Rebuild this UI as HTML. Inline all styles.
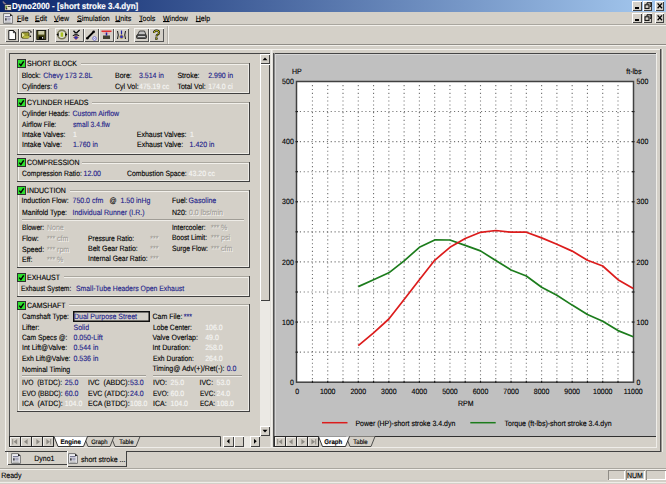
<!DOCTYPE html>
<html><head><meta charset="utf-8"><title>Dyno2000</title>
<style>
html,body{margin:0;padding:0;}
body{width:666px;height:484px;overflow:hidden;position:relative;background:#d4d0c8;font-family:"Liberation Sans",sans-serif;font-size:7px;}
div,span,svg{position:absolute;}
span{white-space:pre;line-height:8px;text-rendering:geometricPrecision;transform-origin:0 5px;transform:scaleY(1.1);-webkit-text-stroke:0.12px currentColor;}
u{text-decoration:underline;text-underline-offset:0px;text-decoration-thickness:0.8px;}
.k{color:#000;}
.b{color:#1e1e8a;}
.d{color:#f6f6f4;}
.e{color:#a3a09a;text-shadow:0.7px 0.7px 0 #fbfaf7;}
.tt{color:#fff;font-weight:bold;}
</style></head><body>
<div style="left:0px;top:0px;width:666px;height:12px;background:linear-gradient(90deg,#0a246a,#a6caf0)"></div>
<svg style="left:1px;top:0px" width="11" height="12" viewBox="0 0 11 12">
<path d="M2 1.5 Q3 3.5 5 4.5" stroke="#8a7a8a" stroke-width="1.6" fill="none"/>
<rect x="3.8" y="4.5" width="6.8" height="5.8" fill="#e6e0cc" stroke="#1a1a40" stroke-width="0.7"/>
<rect x="4.4" y="5.8" width="1.6" height="2.6" fill="#6a9a3a"/>
<rect x="6.6" y="6" width="3" height="1" fill="#504848"/>
<circle cx="5.6" cy="8.8" r="0.8" fill="#302010"/>
</svg>
<span class="tt" style="left:12.00px;top:2.59px;font-size:8px;">Dyno2000 - [short stroke 3.4.dyn]</span>
<div style="left:632px;top:1px;width:9.5px;height:9.5px;background:#d4d0c8;box-shadow:inset 1px 1px 0 #fff, inset -1px -1px 0 #404040"></div>
<div style="left:634.5px;top:7px;width:4px;height:1.5px;background:#000"></div>
<div style="left:642.5px;top:1px;width:9.5px;height:9.5px;background:#d4d0c8;box-shadow:inset 1px 1px 0 #fff, inset -1px -1px 0 #404040"></div>
<svg style="left:642.5px;top:1px" width="10" height="10"><path d="M4 1.8h4v3.5h-1.2M4 1.8v1.3" stroke="#000" stroke-width="1" fill="none"/><rect x="2" y="3.8" width="4" height="3.6" stroke="#000" stroke-width="1" fill="none"/></svg>
<div style="left:654.5px;top:1px;width:9.5px;height:9.5px;background:#d4d0c8;box-shadow:inset 1px 1px 0 #fff, inset -1px -1px 0 #404040"></div>
<svg style="left:654.5px;top:1px" width="10" height="10"><path d="M2.6 2.4L7 7.2M7 2.4L2.6 7.2" stroke="#000" stroke-width="1.3"/></svg>
<div style="left:632px;top:13px;width:9.5px;height:9.5px;background:#d4d0c8;box-shadow:inset 1px 1px 0 #fff, inset -1px -1px 0 #404040"></div>
<div style="left:634.5px;top:19px;width:4px;height:1.5px;background:#000"></div>
<div style="left:642.5px;top:13px;width:9.5px;height:9.5px;background:#d4d0c8;box-shadow:inset 1px 1px 0 #fff, inset -1px -1px 0 #404040"></div>
<svg style="left:642.5px;top:13px" width="10" height="10"><path d="M4 1.8h4v3.5h-1.2M4 1.8v1.3" stroke="#000" stroke-width="1" fill="none"/><rect x="2" y="3.8" width="4" height="3.6" stroke="#000" stroke-width="1" fill="none"/></svg>
<div style="left:654.5px;top:13px;width:9.5px;height:9.5px;background:#d4d0c8;box-shadow:inset 1px 1px 0 #fff, inset -1px -1px 0 #404040"></div>
<svg style="left:654.5px;top:13px" width="10" height="10"><path d="M2.6 2.4L7 7.2M7 2.4L2.6 7.2" stroke="#000" stroke-width="1.3"/></svg>
<svg style="left:3px;top:13px" width="10" height="11" viewBox="0 0 10 11">
<path d="M0.6 0.6H7.2L9.4 2.8V10.4H0.6Z" fill="#eeeef2" stroke="#6a6a6a" stroke-width="0.9"/>
<path d="M7 0.4V3H9.6Z" fill="#202020"/>
<rect x="2" y="3" width="5.6" height="1.3" fill="#7a7a96"/>
<rect x="2.2" y="5.2" width="1.4" height="2.4" fill="#202028"/>
<rect x="4.2" y="5" width="3.4" height="2.6" fill="#a8a8bc"/>
<rect x="1.8" y="8.6" width="6" height="1" fill="#9a9a9a"/>
</svg>
<span class="k" style="left:17.00px;top:15.60px;font-size:7px;"><u>F</u>ile</span>
<span class="k" style="left:35.00px;top:15.60px;font-size:7px;"><u>E</u>dit</span>
<span class="k" style="left:54.00px;top:15.60px;font-size:7px;"><u>V</u>iew</span>
<span class="k" style="left:77.00px;top:15.60px;font-size:7px;"><u>S</u>imulation</span>
<span class="k" style="left:115.30px;top:15.60px;font-size:7px;"><u>U</u>nits</span>
<span class="k" style="left:139.00px;top:15.60px;font-size:7px;"><u>T</u>ools</span>
<span class="k" style="left:163.00px;top:15.60px;font-size:7px;"><u>W</u>indow</span>
<span class="k" style="left:195.80px;top:15.60px;font-size:7px;"><u>H</u>elp</span>
<div style="left:0px;top:24px;width:666px;height:1px;background:#a9a69f"></div>
<div style="left:0px;top:25px;width:666px;height:1px;background:#f2f0eb"></div>
<div style="left:0px;top:44px;width:666px;height:1px;background:#8f8c86"></div>
<div style="left:0px;top:45px;width:666px;height:1px;background:#f2f0eb"></div>
<div style="left:167px;top:26px;width:1px;height:18px;background:#b5b2ab"></div>
<div style="left:168px;top:26px;width:1px;height:18px;background:#f2f0eb"></div>
<div style="left:4.5px;top:28px;width:14.5px;height:14px;box-shadow:inset 1px 1px 0 #f6f5f1, inset -1px -1px 0 #555"></div>
<div style="left:19px;top:28px;width:14.5px;height:14px;box-shadow:inset 1px 1px 0 #f6f5f1, inset -1px -1px 0 #555"></div>
<div style="left:34px;top:28px;width:14.5px;height:14px;box-shadow:inset 1px 1px 0 #f6f5f1, inset -1px -1px 0 #555"></div>
<div style="left:54.5px;top:28px;width:14.5px;height:14px;box-shadow:inset 1px 1px 0 #f6f5f1, inset -1px -1px 0 #555"></div>
<div style="left:69px;top:28px;width:14.5px;height:14px;box-shadow:inset 1px 1px 0 #f6f5f1, inset -1px -1px 0 #555"></div>
<div style="left:84px;top:28px;width:14.5px;height:14px;box-shadow:inset 1px 1px 0 #f6f5f1, inset -1px -1px 0 #555"></div>
<div style="left:99px;top:28px;width:14.5px;height:14px;box-shadow:inset 1px 1px 0 #f6f5f1, inset -1px -1px 0 #555"></div>
<div style="left:114px;top:28px;width:14.5px;height:14px;box-shadow:inset 1px 1px 0 #f6f5f1, inset -1px -1px 0 #555"></div>
<div style="left:134px;top:28px;width:14.5px;height:14px;box-shadow:inset 1px 1px 0 #f6f5f1, inset -1px -1px 0 #555"></div>
<div style="left:149px;top:28px;width:14.5px;height:14px;box-shadow:inset 1px 1px 0 #f6f5f1, inset -1px -1px 0 #555"></div>
<svg style="left:4.5px;top:28px" width="15" height="14" viewBox="0 0 15 14"><path d="M3.8 2.5h4.6l2.2 2.2v6.9h-6.8z" fill="#fff" stroke="#000" stroke-width="0.9"/><path d="M8.4 2.5v2.2h2.2" fill="none" stroke="#000" stroke-width="0.8"/></svg>
<svg style="left:19px;top:28px" width="15" height="14" viewBox="0 0 15 14"><path d="M2.5 5.5Q2.5 4.2 4 4.2H8.5Q10 4.2 10 5.5V9Q10 10.2 8.5 10.2H4Q2.5 10.2 2.5 9Z" fill="#9a9a30" stroke="#303010" stroke-width="0.8"/><path d="M3 4.8L5.8 7L3 9.2Z" fill="#e4e4a0"/><path d="M5 8H10.8L9.6 10.2H4Z" fill="#b8b840"/><path d="M8.8 3Q10.4 1.8 11.8 3.2" stroke="#000" stroke-width="0.9" fill="none"/><circle cx="12" cy="4" r="0.8" fill="#000"/><circle cx="11.4" cy="8.2" r="0.7" fill="#000"/></svg>
<svg style="left:34px;top:28px" width="15" height="14" viewBox="0 0 15 14"><rect x="2.8" y="2.5" width="9" height="9" fill="#4a4a18" stroke="#000" stroke-width="0.8"/><rect x="4.3" y="3" width="6" height="3.6" fill="#c8c8a8"/><rect x="4.8" y="8.5" width="5" height="3" fill="#000"/><rect x="8" y="9" width="1.2" height="1.6" fill="#ddd"/></svg>
<svg style="left:54.5px;top:28px" width="15" height="14" viewBox="0 0 15 14"><circle cx="6.9" cy="6.6" r="4.2" fill="#e4e4d8" stroke="#7a7a58" stroke-width="1.6"/><rect x="5.6" y="4.4" width="2.6" height="4.4" fill="#a8c020"/><path d="M1.4 6.6L3.6 4.9V8.3Z M12.4 6.6L10.2 4.9V8.3Z" fill="#000"/></svg>
<svg style="left:69px;top:28px" width="15" height="14" viewBox="0 0 15 14"><path d="M4.5 2.8L7 5.4L10.6 2" stroke="#000" stroke-width="1.3" fill="none"/><circle cx="7" cy="6.2" r="1.2" fill="#fff" stroke="#000" stroke-width="0.6"/><path d="M3.8 7.6Q7 5.6 10.2 7.6" stroke="#000" stroke-width="1" fill="none"/><path d="M7 7.6L9.6 9.5L7 11.8L4.4 9.5Z" fill="#3030b0" stroke="#d07040" stroke-width="0.6"/></svg>
<svg style="left:84px;top:28px" width="15" height="14" viewBox="0 0 15 14"><path d="M3.5 10l6-6" stroke="#000" stroke-width="1.8"/><circle cx="3.3" cy="10.2" r="1.3" fill="#000"/><circle cx="9.7" cy="3.8" r="1.3" fill="#000"/><circle cx="10.5" cy="10.5" r="1.8" fill="#fff" stroke="#5050c0" stroke-width="0.8"/><path d="M9.6 10.5h1.8" stroke="#5050c0" stroke-width="0.6"/></svg>
<svg style="left:99px;top:28px" width="15" height="14" viewBox="0 0 15 14"><rect x="2.5" y="2.5" width="10" height="1.5" fill="#e03030"/><path d="M3 4.5q4.5 3 9 0" fill="#f0a0a0"/><rect x="4" y="7.5" width="7" height="3.5" fill="#404030"/><path d="M7.5 4.5v3" stroke="#2020a0" stroke-width="1.5"/></svg>
<svg style="left:114px;top:28px" width="15" height="14" viewBox="0 0 15 14"><path d="M3.5 3q1.5 4 0 8M11.5 3q-1.5 4 0 8" stroke="#000" stroke-width="0.9" fill="none"/><path d="M7.5 2.5v4" stroke="#2020a0" stroke-width="1.2"/><circle cx="7.5" cy="8.8" r="1.8" fill="#3030c0" stroke="#c0a020" stroke-width="0.6"/></svg>
<svg style="left:134px;top:28px" width="15" height="14" viewBox="0 0 15 14"><path d="M3.5 7l2-4h5l1.5 4z" fill="#c0c0c0" stroke="#202020" stroke-width="0.8"/><rect x="2.5" y="7" width="10" height="3.5" rx="1" fill="#606060" stroke="#202020" stroke-width="0.8"/><rect x="4" y="8" width="7" height="1" fill="#d0d0d0"/></svg>
<svg style="left:149px;top:28px" width="15" height="14" viewBox="0 0 15 14"><path d="M5 5q0-2.5 2.5-2.5t2.5 2.2q0 1.3-1.6 2.2-0.9 0.6-0.9 1.6" stroke="#000" stroke-width="2" fill="none"/><path d="M5 5q0-2.5 2.5-2.5t2.5 2.2q0 1.3-1.6 2.2-0.9 0.6-0.9 1.6" stroke="#d0d020" stroke-width="1" fill="none"/><rect x="6.6" y="9.8" width="1.8" height="1.8" fill="#a0a010" stroke="#000" stroke-width="0.5"/></svg>
<div style="left:5px;top:49px;width:655px;height:1px;background:#f4f2ee"></div>
<div style="left:5px;top:49px;width:1px;height:402px;background:#f4f2ee"></div>
<div style="left:5px;top:451px;width:657px;height:1px;background:#404040"></div>
<div style="left:660px;top:49px;width:1px;height:403px;background:#4a4a4a"></div>
<div style="left:661px;top:49px;width:1px;height:403px;background:#9a9892"></div>
<div style="left:662px;top:49px;width:1px;height:403px;background:#eceae4"></div>
<div style="left:9px;top:53px;width:647px;height:1px;background:#454545"></div>
<div style="left:9px;top:53px;width:1px;height:394px;background:#505050"></div>
<div style="left:9px;top:447px;width:648px;height:1px;background:#efede9"></div>
<div style="left:656px;top:53px;width:1px;height:395px;background:#efede9"></div>
<div style="left:17px;top:63px;width:233px;height:31px;box-shadow:inset -1px -1px 0 #404040, inset 1px 1px 0 #aaa79f, inset -2px -2px 0 #eeece7, inset 2px 2px 0 #f2f0eb"></div>
<div style="left:26px;top:61.5px;width:55px;height:3.5px;background:#d4d0c8"></div>
<svg style="left:17px;top:59.4px" width="9" height="9" viewBox="0 0 9 9"><rect x="0.5" y="0.5" width="8" height="8" fill="#2ee02e" stroke="#303030" stroke-width="1"/><path d="M2.3 4.6l1.6 2 2.8-4.2" stroke="#000" stroke-width="1.5" fill="none"/></svg>
<span class="k" style="left:27.00px;top:61.20px;font-size:7px;">SHORT BLOCK</span>
<span class="k" style="left:21.70px;top:73.40px;font-size:7px;">Block:</span>
<span class="b" style="left:43.30px;top:73.40px;font-size:7px;">Chevy 173 2.8L</span>
<span class="k" style="left:22.00px;top:83.90px;font-size:7px;transform:scaleX(0.966) scaleY(1.1);">Cylinders:</span>
<span class="b" style="left:53.50px;top:83.90px;font-size:7px;">6</span>
<span class="k" style="left:115.00px;top:73.40px;font-size:7px;">Bore:</span>
<span class="b" style="left:139.00px;top:73.40px;font-size:7px;">3.514 in</span>
<span class="k" style="left:177.40px;top:73.40px;font-size:7px;">Stroke:</span>
<span class="b" style="left:208.20px;top:73.40px;font-size:7px;">2.990 in</span>
<span class="k" style="left:115.00px;top:83.90px;font-size:7px;">Cyl Vol:</span>
<span class="d" style="left:139.00px;top:83.90px;font-size:7px;">475.19 cc</span>
<span class="k" style="left:177.40px;top:83.90px;font-size:7px;">Total Vol:</span>
<span class="d" style="left:208.20px;top:83.90px;font-size:7px;">174.0 ci</span>
<div style="left:17px;top:101.5px;width:233px;height:53.5px;box-shadow:inset -1px -1px 0 #404040, inset 1px 1px 0 #aaa79f, inset -2px -2px 0 #eeece7, inset 2px 2px 0 #f2f0eb"></div>
<div style="left:26px;top:100.0px;width:66px;height:3.5px;background:#d4d0c8"></div>
<svg style="left:17px;top:97.9px" width="9" height="9" viewBox="0 0 9 9"><rect x="0.5" y="0.5" width="8" height="8" fill="#2ee02e" stroke="#303030" stroke-width="1"/><path d="M2.3 4.6l1.6 2 2.8-4.2" stroke="#000" stroke-width="1.5" fill="none"/></svg>
<span class="k" style="left:27.00px;top:99.70px;font-size:7px;">CYLINDER HEADS</span>
<span class="k" style="left:21.60px;top:111.40px;font-size:7px;transform:scaleX(0.959) scaleY(1.1);">Cylinder Heads:</span>
<span class="b" style="left:72.50px;top:111.40px;font-size:7px;">Custom Airflow</span>
<span class="k" style="left:22.00px;top:121.70px;font-size:7px;transform:scaleX(0.944) scaleY(1.1);">Airflow File:</span>
<span class="b" style="left:73.00px;top:121.70px;font-size:7px;transform:scaleX(0.96) scaleY(1.1);">small 3.4.flw</span>
<span class="k" style="left:22.00px;top:132.00px;font-size:7px;">Intake Valves:</span>
<span class="d" style="left:73.00px;top:132.00px;font-size:7px;">1</span>
<span class="k" style="left:22.00px;top:142.30px;font-size:7px;">Intake Valve:</span>
<span class="b" style="left:73.00px;top:142.30px;font-size:7px;">1.760 in</span>
<span class="k" style="left:136.80px;top:132.00px;font-size:7px;">Exhaust Valves:</span>
<span class="d" style="left:190.00px;top:132.00px;font-size:7px;">1</span>
<span class="k" style="left:137.00px;top:142.30px;font-size:7px;">Exhaust Valve:</span>
<span class="b" style="left:189.60px;top:142.30px;font-size:7px;">1.420 in</span>
<div style="left:17px;top:161.6px;width:233px;height:20.900000000000006px;box-shadow:inset -1px -1px 0 #404040, inset 1px 1px 0 #aaa79f, inset -2px -2px 0 #eeece7, inset 2px 2px 0 #f2f0eb"></div>
<div style="left:26px;top:160.1px;width:56px;height:3.5px;background:#d4d0c8"></div>
<svg style="left:17px;top:158.0px" width="9" height="9" viewBox="0 0 9 9"><rect x="0.5" y="0.5" width="8" height="8" fill="#2ee02e" stroke="#303030" stroke-width="1"/><path d="M2.3 4.6l1.6 2 2.8-4.2" stroke="#000" stroke-width="1.5" fill="none"/></svg>
<span class="k" style="left:27.00px;top:159.80px;font-size:7px;">COMPRESSION</span>
<span class="k" style="left:21.50px;top:170.90px;font-size:7px;transform:scaleX(0.973) scaleY(1.1);">Compression Ratio:</span>
<span class="b" style="left:83.50px;top:170.90px;font-size:7px;">12.00</span>
<span class="k" style="left:126.50px;top:170.90px;font-size:7px;transform:scaleX(0.978) scaleY(1.1);">Combustion Space:</span>
<span class="d" style="left:188.60px;top:170.90px;font-size:7px;">43.20 cc</span>
<div style="left:17px;top:189.8px;width:233px;height:78.69999999999999px;box-shadow:inset -1px -1px 0 #404040, inset 1px 1px 0 #aaa79f, inset -2px -2px 0 #eeece7, inset 2px 2px 0 #f2f0eb"></div>
<div style="left:26px;top:188.3px;width:44px;height:3.5px;background:#d4d0c8"></div>
<svg style="left:17px;top:186.2px" width="9" height="9" viewBox="0 0 9 9"><rect x="0.5" y="0.5" width="8" height="8" fill="#2ee02e" stroke="#303030" stroke-width="1"/><path d="M2.3 4.6l1.6 2 2.8-4.2" stroke="#000" stroke-width="1.5" fill="none"/></svg>
<span class="k" style="left:27.00px;top:188.00px;font-size:7px;">INDUCTION</span>
<span class="k" style="left:21.50px;top:198.30px;font-size:7px;">Induction Flow:</span>
<span class="b" style="left:72.50px;top:198.30px;font-size:7px;">750.0 cfm</span>
<span class="k" style="left:109.50px;top:198.30px;font-size:7px;">@</span>
<span class="b" style="left:120.50px;top:198.30px;font-size:7px;">1.50 inHg</span>
<span class="k" style="left:172.00px;top:198.30px;font-size:7px;">Fuel:</span>
<span class="b" style="left:188.60px;top:198.30px;font-size:7px;">Gasoline</span>
<span class="k" style="left:21.50px;top:209.60px;font-size:7px;transform:scaleX(0.99) scaleY(1.1);">Manifold Type:</span>
<span class="b" style="left:72.50px;top:209.60px;font-size:7px;">Individual Runner (I.R.)</span>
<span class="k" style="left:172.00px;top:209.60px;font-size:7px;">N20:</span>
<span class="e" style="left:189.00px;top:209.60px;font-size:7px;">0.0 lbs/min</span>
<div style="left:22px;top:219px;width:221.5px;height:1px;background:#a09d96"></div>
<div style="left:22px;top:220px;width:221.5px;height:1px;background:#eeece7"></div>
<span class="k" style="left:22.00px;top:225.20px;font-size:7px;transform:scaleX(0.948) scaleY(1.1);">Blower:</span>
<span class="e" style="left:47.00px;top:225.20px;font-size:7px;">None</span>
<span class="k" style="left:172.00px;top:224.90px;font-size:7px;transform:scaleX(0.963) scaleY(1.1);">Intercooler:</span>
<span class="e" style="left:211.00px;top:224.90px;font-size:7px;">*** %</span>
<span class="k" style="left:22.00px;top:235.90px;font-size:7px;">Flow:</span>
<span class="e" style="left:47.00px;top:235.90px;font-size:7px;">*** cfm</span>
<span class="k" style="left:88.00px;top:235.50px;font-size:7px;transform:scaleX(0.958) scaleY(1.1);">Pressure Ratio:</span>
<span class="e" style="left:150.30px;top:235.50px;font-size:7px;">***</span>
<span class="k" style="left:172.00px;top:235.20px;font-size:7px;transform:scaleX(0.958) scaleY(1.1);">Boost Limit:</span>
<span class="e" style="left:211.00px;top:235.20px;font-size:7px;">*** psi</span>
<span class="k" style="left:22.00px;top:246.50px;font-size:7px;">Speed:</span>
<span class="e" style="left:47.00px;top:246.50px;font-size:7px;">*** rpm</span>
<span class="k" style="left:88.00px;top:246.00px;font-size:7px;">Belt Gear Ratio:</span>
<span class="e" style="left:150.30px;top:246.00px;font-size:7px;">***</span>
<span class="k" style="left:172.00px;top:246.00px;font-size:7px;transform:scaleX(0.962) scaleY(1.1);">Surge Flow:</span>
<span class="e" style="left:211.00px;top:246.00px;font-size:7px;">*** cfm</span>
<span class="k" style="left:22.00px;top:256.50px;font-size:7px;">Eff:</span>
<span class="e" style="left:47.00px;top:256.50px;font-size:7px;">*** %</span>
<span class="k" style="left:88.00px;top:256.00px;font-size:7px;transform:scaleX(0.977) scaleY(1.1);">Internal Gear Ratio:</span>
<span class="e" style="left:150.30px;top:256.00px;font-size:7px;">***</span>
<div style="left:17px;top:276.3px;width:233px;height:20.5px;box-shadow:inset -1px -1px 0 #404040, inset 1px 1px 0 #aaa79f, inset -2px -2px 0 #eeece7, inset 2px 2px 0 #f2f0eb"></div>
<div style="left:26px;top:274.8px;width:38px;height:3.5px;background:#d4d0c8"></div>
<svg style="left:17px;top:272.7px" width="9" height="9" viewBox="0 0 9 9"><rect x="0.5" y="0.5" width="8" height="8" fill="#2ee02e" stroke="#303030" stroke-width="1"/><path d="M2.3 4.6l1.6 2 2.8-4.2" stroke="#000" stroke-width="1.5" fill="none"/></svg>
<span class="k" style="left:27.00px;top:274.50px;font-size:7px;">EXHAUST</span>
<span class="k" style="left:21.00px;top:286.30px;font-size:7px;transform:scaleX(0.958) scaleY(1.1);">Exhaust System:</span>
<span class="b" style="left:76.00px;top:286.30px;font-size:7px;transform:scaleX(0.98) scaleY(1.1);">Small-Tube Headers Open Exhaust</span>
<div style="left:17px;top:304.4px;width:233px;height:107.60000000000002px;box-shadow:inset -1px -1px 0 #404040, inset 1px 1px 0 #aaa79f, inset -2px -2px 0 #eeece7, inset 2px 2px 0 #f2f0eb"></div>
<div style="left:26px;top:302.9px;width:43px;height:3.5px;background:#d4d0c8"></div>
<svg style="left:17px;top:300.8px" width="9" height="9" viewBox="0 0 9 9"><rect x="0.5" y="0.5" width="8" height="8" fill="#2ee02e" stroke="#303030" stroke-width="1"/><path d="M2.3 4.6l1.6 2 2.8-4.2" stroke="#000" stroke-width="1.5" fill="none"/></svg>
<span class="k" style="left:27.00px;top:302.60px;font-size:7px;">CAMSHAFT</span>
<span class="k" style="left:22.00px;top:314.40px;font-size:7px;transform:scaleX(0.959) scaleY(1.1);">Camshaft Type:</span>
<div style="left:72.5px;top:311px;width:77.5px;height:10.5px;box-shadow:inset 0 0 0 1.5px #101010;background:#d4d0c8"></div>
<span class="b" style="left:74.00px;top:314.40px;font-size:7px;">Dual Purpose Street</span>
<span class="k" style="left:152.50px;top:314.40px;font-size:7px;">Cam File:</span>
<span class="b" style="left:183.70px;top:314.40px;font-size:7px;">***</span>
<span class="k" style="left:22.00px;top:324.70px;font-size:7px;">Lifter:</span>
<span class="b" style="left:73.50px;top:324.70px;font-size:7px;">Solid</span>
<span class="k" style="left:152.50px;top:324.50px;font-size:7px;transform:scaleX(0.9625) scaleY(1.1);">Lobe Center:</span>
<span class="d" style="left:205.20px;top:324.50px;font-size:7px;">106.0</span>
<span class="k" style="left:22.00px;top:335.00px;font-size:7px;transform:scaleX(0.962) scaleY(1.1);">Cam Specs @:</span>
<span class="b" style="left:73.50px;top:335.00px;font-size:7px;">0.050-Lift</span>
<span class="k" style="left:152.50px;top:335.00px;font-size:7px;">Valve Overlap:</span>
<span class="d" style="left:205.20px;top:335.00px;font-size:7px;">49.0</span>
<span class="k" style="left:22.00px;top:345.30px;font-size:7px;">Int Lift@Valve:</span>
<span class="b" style="left:73.50px;top:345.30px;font-size:7px;">0.544 in</span>
<span class="k" style="left:152.50px;top:345.30px;font-size:7px;">Int Duration:</span>
<span class="d" style="left:205.20px;top:345.30px;font-size:7px;">258.0</span>
<span class="k" style="left:22.00px;top:356.00px;font-size:7px;transform:scaleX(0.98) scaleY(1.1);">Exh Lift@Valve:</span>
<span class="b" style="left:73.50px;top:356.00px;font-size:7px;">0.536 in</span>
<span class="k" style="left:152.50px;top:356.00px;font-size:7px;transform:scaleX(0.964) scaleY(1.1);">Exh Duration:</span>
<span class="d" style="left:205.20px;top:356.00px;font-size:7px;">264.0</span>
<span class="k" style="left:22.00px;top:366.50px;font-size:7px;">Nominal Timing</span>
<span class="k" style="left:152.50px;top:366.20px;font-size:7px;">Timing@ Adv(+)/Ret(-):</span>
<span class="b" style="left:226.70px;top:366.20px;font-size:7px;">0.0</span>
<div style="left:22px;top:375px;width:124px;height:1px;background:#a09d96"></div>
<div style="left:22px;top:376px;width:124px;height:1px;background:#eeece7"></div>
<div style="left:153px;top:375px;width:89px;height:1px;background:#a09d96"></div>
<div style="left:153px;top:376px;width:89px;height:1px;background:#eeece7"></div>
<span class="k" style="left:22.00px;top:380.40px;font-size:7px;transform:scaleX(0.963) scaleY(1.1);">IVO&nbsp; (BTDC):</span>
<span class="b" style="left:64.80px;top:380.40px;font-size:7px;">25.0</span>
<span class="k" style="left:88.00px;top:380.40px;font-size:7px;">IVC&nbsp; (ABDC):</span>
<span class="b" style="left:130.00px;top:380.40px;font-size:7px;">53.0</span>
<span class="k" style="left:153.00px;top:380.40px;font-size:7px;">IVO:</span>
<span class="d" style="left:170.50px;top:380.40px;font-size:7px;">25.0</span>
<span class="k" style="left:199.50px;top:380.40px;font-size:7px;">IVC:</span>
<span class="d" style="left:216.50px;top:380.40px;font-size:7px;">53.0</span>
<span class="k" style="left:22.00px;top:390.70px;font-size:7px;transform:scaleX(0.95) scaleY(1.1);">EVO (BBDC):</span>
<span class="b" style="left:64.80px;top:390.70px;font-size:7px;">60.0</span>
<span class="k" style="left:88.00px;top:390.70px;font-size:7px;">EVC (ATDC):</span>
<span class="b" style="left:130.00px;top:390.70px;font-size:7px;">24.0</span>
<span class="k" style="left:153.00px;top:390.70px;font-size:7px;transform:scaleX(0.93) scaleY(1.1);">EVO:</span>
<span class="d" style="left:170.50px;top:390.70px;font-size:7px;">60.0</span>
<span class="k" style="left:199.50px;top:390.70px;font-size:7px;transform:scaleX(0.93) scaleY(1.1);">EVC:</span>
<span class="d" style="left:216.50px;top:390.70px;font-size:7px;">24.0</span>
<span class="k" style="left:22.00px;top:401.00px;font-size:7px;">ICA&nbsp; (ATDC):</span>
<span class="d" style="left:64.80px;top:401.00px;font-size:7px;">104.0</span>
<span class="k" style="left:88.00px;top:401.00px;font-size:7px;">ECA (BTDC):</span>
<span class="d" style="left:130.00px;top:401.00px;font-size:7px;">108.0</span>
<span class="k" style="left:153.00px;top:401.00px;font-size:7px;">ICA:</span>
<span class="d" style="left:170.50px;top:401.00px;font-size:7px;">104.0</span>
<span class="k" style="left:199.50px;top:401.00px;font-size:7px;transform:scaleX(0.92) scaleY(1.1);">ECA:</span>
<span class="d" style="left:216.50px;top:401.00px;font-size:7px;">108.0</span>
<div style="left:260px;top:54px;width:10px;height:382px;background:#ebe9e4"></div>
<div style="left:260px;top:54px;width:10px;height:10px;background:#d4d0c8;box-shadow:inset 1px 1px 0 #fff, inset -1px -1px 0 #404040"></div>
<svg style="left:260px;top:54px" width="10" height="10"><path d="M2.5 6.3h5L5 3.6z" fill="#000"/></svg>
<div style="left:260px;top:64px;width:10px;height:237px;background:#d4d0c8;box-shadow:inset 1px 1px 0 #fff, inset -1px -1px 0 #404040"></div>
<div style="left:260px;top:426px;width:10px;height:10px;background:#d4d0c8;box-shadow:inset 1px 1px 0 #fff, inset -1px -1px 0 #404040"></div>
<svg style="left:260px;top:426px" width="10" height="10"><path d="M2.5 3.7h5L5 6.4z" fill="#000"/></svg>
<div style="left:10px;top:436px;width:250px;height:10px;background:#d4d0c8"></div>
<div style="left:9px;top:436px;width:45px;height:11px;background:#d4d0c8"></div>
<div style="left:9px;top:436px;width:45px;height:1px;background:#2a2a2a"></div>
<div style="left:9px;top:446px;width:45px;height:1px;background:#2a2a2a"></div>
<div style="left:9px;top:436px;width:1px;height:11px;background:#2a2a2a"></div>
<div style="left:20px;top:436px;width:1px;height:11px;background:#2a2a2a"></div>
<div style="left:31px;top:436px;width:1px;height:11px;background:#2a2a2a"></div>
<div style="left:42px;top:436px;width:1px;height:11px;background:#2a2a2a"></div>
<div style="left:53px;top:436px;width:1px;height:11px;background:#2a2a2a"></div>
<div style="left:10px;top:437px;width:1px;height:9px;background:#f2f0ec"></div>
<div style="left:10px;top:437px;width:10px;height:1px;background:#f2f0ec"></div>
<div style="left:21px;top:437px;width:1px;height:9px;background:#f2f0ec"></div>
<div style="left:21px;top:437px;width:10px;height:1px;background:#f2f0ec"></div>
<div style="left:32px;top:437px;width:1px;height:9px;background:#f2f0ec"></div>
<div style="left:32px;top:437px;width:10px;height:1px;background:#f2f0ec"></div>
<div style="left:43px;top:437px;width:1px;height:9px;background:#f2f0ec"></div>
<div style="left:43px;top:437px;width:10px;height:1px;background:#f2f0ec"></div>
<svg style="left:9px;top:436px" width="45" height="11" viewBox="0 0 45 11"><g fill="#8e8b84"><rect x="3.2" y="3" width="1" height="5.5"/><path d="M8.2 3L4.6 5.75 8.2 8.5z"/><path d="M18.6 3L15 5.75 18.6 8.5z"/><path d="M27.4 3L31 5.75 27.4 8.5z"/><path d="M37.4 3L41 5.75 37.4 8.5z"/><rect x="41.2" y="3" width="1" height="5.5"/></g></svg>
<svg style="left:53px;top:435px" width="170" height="13" viewBox="53 435 170 13">
<path d="M53.5 436.5H220.5V446.5" stroke="#404040" fill="none"/>
<path d="M111 436.5L115 446.5H136L140 436.5z" fill="#d4d0c8" stroke="#404040" stroke-width="0.9"/>
<path d="M84 436.5L88 446.5H110L114 436.5z" fill="#d4d0c8" stroke="#404040" stroke-width="0.9"/>
<path d="M54 436.5L58 446.5H83.5L87.5 436.5" fill="#fff" stroke="#202020" stroke-width="0.9"/>
</svg>
<span class="k" style="left:60.50px;top:438.94px;font-size:6.1px;font-weight:bold">Engine</span>
<span class="k" style="left:91.20px;top:439.09px;font-size:5.9px;">Graph</span>
<span class="k" style="left:119.20px;top:439.02px;font-size:6.0px;">Table</span>
<div style="left:223px;top:436px;width:10.5px;height:10.5px;background:#d4d0c8;box-shadow:inset 1px 1px 0 #fff, inset -1px -1px 0 #404040"></div>
<svg style="left:223px;top:436px" width="11" height="11"><path d="M6.5 2.8v5L3.8 5.3z" fill="#000"/></svg>
<div style="left:234px;top:436px;width:10px;height:10.5px;background:#d4d0c8;box-shadow:inset 1px 1px 0 #fff, inset -1px -1px 0 #404040"></div>
<div style="left:244px;top:436px;width:6px;height:10.5px;background:#ebe9e4"></div>
<div style="left:250px;top:436px;width:10px;height:10.5px;background:#d4d0c8;box-shadow:inset 1px 1px 0 #fff, inset -1px -1px 0 #404040"></div>
<svg style="left:250px;top:436px" width="11" height="11"><path d="M4 2.8v5L6.7 5.3z" fill="#000"/></svg>
<div style="left:260px;top:436px;width:10px;height:10.5px;background:#d4d0c8"></div>
<div style="left:270px;top:50px;width:3px;height:397px;background:#e2e0da"></div>
<div style="left:271px;top:50px;width:1px;height:397px;background:#f2f0ec"></div>
<div style="left:273px;top:53px;width:1px;height:394px;background:#505050"></div>
<div style="left:274px;top:54px;width:382px;height:382px;background:#c0c0c0"></div>
<div style="left:274px;top:53px;width:1px;height:383px;background:#8a8a8a"></div>
<div style="left:275px;top:55px;width:1px;height:381px;background:#d6d6d6"></div>
<div style="left:275px;top:54px;width:381px;height:1px;background:#d6d6d6"></div>
<div style="left:274px;top:436px;width:382px;height:11px;background:#d4d0c8"></div>
<div style="left:274px;top:436px;width:382px;height:1px;background:#303030"></div>
<div style="left:274px;top:436px;width:45px;height:11px;background:#d4d0c8"></div>
<div style="left:274px;top:436px;width:45px;height:1px;background:#2a2a2a"></div>
<div style="left:274px;top:446px;width:45px;height:1px;background:#2a2a2a"></div>
<div style="left:274px;top:436px;width:1px;height:11px;background:#2a2a2a"></div>
<div style="left:285px;top:436px;width:1px;height:11px;background:#2a2a2a"></div>
<div style="left:296px;top:436px;width:1px;height:11px;background:#2a2a2a"></div>
<div style="left:307px;top:436px;width:1px;height:11px;background:#2a2a2a"></div>
<div style="left:318px;top:436px;width:1px;height:11px;background:#2a2a2a"></div>
<div style="left:275px;top:437px;width:1px;height:9px;background:#f2f0ec"></div>
<div style="left:275px;top:437px;width:10px;height:1px;background:#f2f0ec"></div>
<div style="left:286px;top:437px;width:1px;height:9px;background:#f2f0ec"></div>
<div style="left:286px;top:437px;width:10px;height:1px;background:#f2f0ec"></div>
<div style="left:297px;top:437px;width:1px;height:9px;background:#f2f0ec"></div>
<div style="left:297px;top:437px;width:10px;height:1px;background:#f2f0ec"></div>
<div style="left:308px;top:437px;width:1px;height:9px;background:#f2f0ec"></div>
<div style="left:308px;top:437px;width:10px;height:1px;background:#f2f0ec"></div>
<svg style="left:274px;top:436px" width="45" height="11" viewBox="0 0 45 11"><g fill="#8e8b84"><rect x="3.2" y="3" width="1" height="5.5"/><path d="M8.2 3L4.6 5.75 8.2 8.5z"/><path d="M18.6 3L15 5.75 18.6 8.5z"/><path d="M27.4 3L31 5.75 27.4 8.5z"/><path d="M37.4 3L41 5.75 37.4 8.5z"/><rect x="41.2" y="3" width="1" height="5.5"/></g></svg>
<svg style="left:317px;top:435px" width="62" height="13" viewBox="317 435 62 13">
<path d="M346 436.5L350 446.5H371L375 436.5" fill="#d4d0c8" stroke="#404040" stroke-width="0.9"/>
<path d="M318.5 436.5L322.5 446.5H345.5L349.5 436.5" fill="#fff" stroke="#202020" stroke-width="0.9"/>
</svg>
<span class="k" style="left:324.30px;top:438.94px;font-size:6.1px;font-weight:bold">Graph</span>
<span class="k" style="left:353.30px;top:439.02px;font-size:6.0px;">Table</span>
<svg style="left:0;top:0" width="666" height="484"><rect x="296.5" y="81.5" width="337.0" height="300.7" fill="#fff"/><line x1="312.45" y1="85.1" x2="312.45" y2="382.2" stroke="#707070" stroke-width="1.1" stroke-dasharray="1.1 2.755"/><line x1="327.73" y1="85.1" x2="327.73" y2="382.2" stroke="#707070" stroke-width="1.1" stroke-dasharray="1.1 2.755"/><line x1="343.00" y1="85.1" x2="343.00" y2="382.2" stroke="#707070" stroke-width="1.1" stroke-dasharray="1.1 2.755"/><line x1="358.28" y1="85.1" x2="358.28" y2="382.2" stroke="#707070" stroke-width="1.1" stroke-dasharray="1.1 2.755"/><line x1="373.56" y1="85.1" x2="373.56" y2="382.2" stroke="#707070" stroke-width="1.1" stroke-dasharray="1.1 2.755"/><line x1="388.84" y1="85.1" x2="388.84" y2="382.2" stroke="#707070" stroke-width="1.1" stroke-dasharray="1.1 2.755"/><line x1="404.11" y1="85.1" x2="404.11" y2="382.2" stroke="#707070" stroke-width="1.1" stroke-dasharray="1.1 2.755"/><line x1="419.39" y1="85.1" x2="419.39" y2="382.2" stroke="#707070" stroke-width="1.1" stroke-dasharray="1.1 2.755"/><line x1="434.67" y1="85.1" x2="434.67" y2="382.2" stroke="#707070" stroke-width="1.1" stroke-dasharray="1.1 2.755"/><line x1="449.95" y1="85.1" x2="449.95" y2="382.2" stroke="#707070" stroke-width="1.1" stroke-dasharray="1.1 2.755"/><line x1="465.22" y1="85.1" x2="465.22" y2="382.2" stroke="#707070" stroke-width="1.1" stroke-dasharray="1.1 2.755"/><line x1="480.50" y1="85.1" x2="480.50" y2="382.2" stroke="#707070" stroke-width="1.1" stroke-dasharray="1.1 2.755"/><line x1="495.78" y1="85.1" x2="495.78" y2="382.2" stroke="#707070" stroke-width="1.1" stroke-dasharray="1.1 2.755"/><line x1="511.06" y1="85.1" x2="511.06" y2="382.2" stroke="#707070" stroke-width="1.1" stroke-dasharray="1.1 2.755"/><line x1="526.33" y1="85.1" x2="526.33" y2="382.2" stroke="#707070" stroke-width="1.1" stroke-dasharray="1.1 2.755"/><line x1="541.61" y1="85.1" x2="541.61" y2="382.2" stroke="#707070" stroke-width="1.1" stroke-dasharray="1.1 2.755"/><line x1="556.89" y1="85.1" x2="556.89" y2="382.2" stroke="#707070" stroke-width="1.1" stroke-dasharray="1.1 2.755"/><line x1="572.16" y1="85.1" x2="572.16" y2="382.2" stroke="#707070" stroke-width="1.1" stroke-dasharray="1.1 2.755"/><line x1="587.44" y1="85.1" x2="587.44" y2="382.2" stroke="#707070" stroke-width="1.1" stroke-dasharray="1.1 2.755"/><line x1="602.72" y1="85.1" x2="602.72" y2="382.2" stroke="#707070" stroke-width="1.1" stroke-dasharray="1.1 2.755"/><line x1="618.00" y1="85.1" x2="618.00" y2="382.2" stroke="#707070" stroke-width="1.1" stroke-dasharray="1.1 2.755"/><line x1="299.85" y1="352.13" x2="633.5" y2="352.13" stroke="#707070" stroke-width="1.1" stroke-dasharray="1.1 2.755"/><line x1="299.85" y1="322.06" x2="633.5" y2="322.06" stroke="#707070" stroke-width="1.1" stroke-dasharray="1.1 2.755"/><line x1="299.85" y1="291.99" x2="633.5" y2="291.99" stroke="#707070" stroke-width="1.1" stroke-dasharray="1.1 2.755"/><line x1="299.85" y1="261.92" x2="633.5" y2="261.92" stroke="#707070" stroke-width="1.1" stroke-dasharray="1.1 2.755"/><line x1="299.85" y1="231.85" x2="633.5" y2="231.85" stroke="#707070" stroke-width="1.1" stroke-dasharray="1.1 2.755"/><line x1="299.85" y1="201.78" x2="633.5" y2="201.78" stroke="#707070" stroke-width="1.1" stroke-dasharray="1.1 2.755"/><line x1="299.85" y1="171.71" x2="633.5" y2="171.71" stroke="#707070" stroke-width="1.1" stroke-dasharray="1.1 2.755"/><line x1="299.85" y1="141.64" x2="633.5" y2="141.64" stroke="#707070" stroke-width="1.1" stroke-dasharray="1.1 2.755"/><line x1="299.85" y1="111.57" x2="633.5" y2="111.57" stroke="#707070" stroke-width="1.1" stroke-dasharray="1.1 2.755"/><rect x="296.5" y="81.5" width="337.0" height="300.7" fill="none" stroke="#404040" stroke-width="1.5"/><line x1="312.45" y1="380.7" x2="312.45" y2="383.0" stroke="#202020" stroke-width="1.2"/><line x1="327.73" y1="380.7" x2="327.73" y2="383.0" stroke="#202020" stroke-width="1.2"/><line x1="343.00" y1="380.7" x2="343.00" y2="383.0" stroke="#202020" stroke-width="1.2"/><line x1="358.28" y1="380.7" x2="358.28" y2="383.0" stroke="#202020" stroke-width="1.2"/><line x1="373.56" y1="380.7" x2="373.56" y2="383.0" stroke="#202020" stroke-width="1.2"/><line x1="388.84" y1="380.7" x2="388.84" y2="383.0" stroke="#202020" stroke-width="1.2"/><line x1="404.11" y1="380.7" x2="404.11" y2="383.0" stroke="#202020" stroke-width="1.2"/><line x1="419.39" y1="380.7" x2="419.39" y2="383.0" stroke="#202020" stroke-width="1.2"/><line x1="434.67" y1="380.7" x2="434.67" y2="383.0" stroke="#202020" stroke-width="1.2"/><line x1="449.95" y1="380.7" x2="449.95" y2="383.0" stroke="#202020" stroke-width="1.2"/><line x1="465.22" y1="380.7" x2="465.22" y2="383.0" stroke="#202020" stroke-width="1.2"/><line x1="480.50" y1="380.7" x2="480.50" y2="383.0" stroke="#202020" stroke-width="1.2"/><line x1="495.78" y1="380.7" x2="495.78" y2="383.0" stroke="#202020" stroke-width="1.2"/><line x1="511.06" y1="380.7" x2="511.06" y2="383.0" stroke="#202020" stroke-width="1.2"/><line x1="526.33" y1="380.7" x2="526.33" y2="383.0" stroke="#202020" stroke-width="1.2"/><line x1="541.61" y1="380.7" x2="541.61" y2="383.0" stroke="#202020" stroke-width="1.2"/><line x1="556.89" y1="380.7" x2="556.89" y2="383.0" stroke="#202020" stroke-width="1.2"/><line x1="572.16" y1="380.7" x2="572.16" y2="383.0" stroke="#202020" stroke-width="1.2"/><line x1="587.44" y1="380.7" x2="587.44" y2="383.0" stroke="#202020" stroke-width="1.2"/><line x1="602.72" y1="380.7" x2="602.72" y2="383.0" stroke="#202020" stroke-width="1.2"/><line x1="618.00" y1="380.7" x2="618.00" y2="383.0" stroke="#202020" stroke-width="1.2"/><line x1="295.5" y1="352.13" x2="298.0" y2="352.13" stroke="#202020" stroke-width="1.2"/><line x1="632.0" y1="352.13" x2="634.5" y2="352.13" stroke="#202020" stroke-width="1.2"/><line x1="295.5" y1="322.06" x2="298.0" y2="322.06" stroke="#202020" stroke-width="1.2"/><line x1="632.0" y1="322.06" x2="634.5" y2="322.06" stroke="#202020" stroke-width="1.2"/><line x1="295.5" y1="291.99" x2="298.0" y2="291.99" stroke="#202020" stroke-width="1.2"/><line x1="632.0" y1="291.99" x2="634.5" y2="291.99" stroke="#202020" stroke-width="1.2"/><line x1="295.5" y1="261.92" x2="298.0" y2="261.92" stroke="#202020" stroke-width="1.2"/><line x1="632.0" y1="261.92" x2="634.5" y2="261.92" stroke="#202020" stroke-width="1.2"/><line x1="295.5" y1="231.85" x2="298.0" y2="231.85" stroke="#202020" stroke-width="1.2"/><line x1="632.0" y1="231.85" x2="634.5" y2="231.85" stroke="#202020" stroke-width="1.2"/><line x1="295.5" y1="201.78" x2="298.0" y2="201.78" stroke="#202020" stroke-width="1.2"/><line x1="632.0" y1="201.78" x2="634.5" y2="201.78" stroke="#202020" stroke-width="1.2"/><line x1="295.5" y1="171.71" x2="298.0" y2="171.71" stroke="#202020" stroke-width="1.2"/><line x1="632.0" y1="171.71" x2="634.5" y2="171.71" stroke="#202020" stroke-width="1.2"/><line x1="295.5" y1="141.64" x2="298.0" y2="141.64" stroke="#202020" stroke-width="1.2"/><line x1="632.0" y1="141.64" x2="634.5" y2="141.64" stroke="#202020" stroke-width="1.2"/><line x1="295.5" y1="111.57" x2="298.0" y2="111.57" stroke="#202020" stroke-width="1.2"/><line x1="632.0" y1="111.57" x2="634.5" y2="111.57" stroke="#202020" stroke-width="1.2"/><polyline points="358.28,286.60 373.56,279.80 388.84,272.80 404.11,260.90 419.39,247.30 434.67,239.90 449.95,240.00 465.22,245.40 480.50,250.90 495.78,260.50 511.06,270.00 526.33,276.00 541.61,287.20 556.89,295.30 572.16,305.10 587.44,314.40 602.72,321.30 618.00,330.60 633.27,336.70" fill="none" stroke="#1c7c1c" stroke-width="1.7" stroke-linejoin="round"/><polyline points="358.28,345.65 373.56,332.80 388.84,319.00 404.11,299.50 419.39,279.70 434.67,260.30 449.95,247.30 465.22,238.50 480.50,232.30 495.78,230.50 511.06,232.20 526.33,232.20 541.61,237.90 556.89,244.30 572.16,251.10 587.44,260.20 602.72,266.00 618.00,279.70 633.27,288.40" fill="none" stroke="#dc1c1c" stroke-width="1.7" stroke-linejoin="round"/><line x1="322" y1="422.7" x2="347.5" y2="422.7" stroke="#dc1c1c" stroke-width="1.5"/><line x1="470.3" y1="422.7" x2="495.7" y2="422.7" stroke="#1c7c1c" stroke-width="1.5"/></svg>
<span class="k" style="left:292.00px;top:68.50px;font-size:7px;">HP</span>
<span class="k" style="left:626.30px;top:68.50px;font-size:7px;">ft-lbs</span>
<span class="k" style="left:250px;width:43.8px;text-align:right;top:379.90px">0</span>
<span class="k" style="left:636.60px;top:379.90px;font-size:7px;">0</span>
<span class="k" style="left:250px;width:43.8px;text-align:right;top:319.76px">100</span>
<span class="k" style="left:636.60px;top:319.76px;font-size:7px;">100</span>
<span class="k" style="left:250px;width:43.8px;text-align:right;top:259.62px">200</span>
<span class="k" style="left:636.60px;top:259.62px;font-size:7px;">200</span>
<span class="k" style="left:250px;width:43.8px;text-align:right;top:199.48px">300</span>
<span class="k" style="left:636.60px;top:199.48px;font-size:7px;">300</span>
<span class="k" style="left:250px;width:43.8px;text-align:right;top:139.34px">400</span>
<span class="k" style="left:636.60px;top:139.34px;font-size:7px;">400</span>
<span class="k" style="left:250px;width:43.8px;text-align:right;top:79.20px">500</span>
<span class="k" style="left:636.60px;top:79.20px;font-size:7px;">500</span>
<span class="k" style="left:277.17px;width:40px;text-align:center;top:388.70px">0</span>
<span class="k" style="left:307.73px;width:40px;text-align:center;top:388.70px">1000</span>
<span class="k" style="left:338.28px;width:40px;text-align:center;top:388.70px">2000</span>
<span class="k" style="left:368.84px;width:40px;text-align:center;top:388.70px">3000</span>
<span class="k" style="left:399.39px;width:40px;text-align:center;top:388.70px">4000</span>
<span class="k" style="left:429.95px;width:40px;text-align:center;top:388.70px">5000</span>
<span class="k" style="left:460.50px;width:40px;text-align:center;top:388.70px">6000</span>
<span class="k" style="left:491.06px;width:40px;text-align:center;top:388.70px">7000</span>
<span class="k" style="left:521.61px;width:40px;text-align:center;top:388.70px">8000</span>
<span class="k" style="left:552.16px;width:40px;text-align:center;top:388.70px">9000</span>
<span class="k" style="left:582.72px;width:40px;text-align:center;top:388.70px">10000</span>
<span class="k" style="left:613.27px;width:40px;text-align:center;top:388.70px">11000</span>
<span class="k" style="left:458.00px;top:400.70px;font-size:7px;">RPM</span>
<span class="k" style="left:355.40px;top:420.70px;font-size:7px;">Power (HP)-short stroke 3.4.dyn</span>
<span class="k" style="left:504.60px;top:420.70px;font-size:7px;">Torque (ft-lbs)-short stroke 3.4.dyn</span>
<div style="left:7px;top:452px;width:60px;height:13px;background:#d4d0c8;box-shadow:inset 1px 0 0 #fff, inset 0 -1px 0 #404040"></div>
<svg style="left:11.4px;top:453.2px" width="10" height="11" viewBox="0 0 10 11"><path d="M0.6 0.6H7.2L9.4 2.8V10.4H0.6Z" fill="#eeeef2" stroke="#6a6a6a" stroke-width="0.9"/><path d="M7 0.4V3H9.6Z" fill="#202020"/><rect x="2" y="3" width="5.6" height="1.3" fill="#7a7a96"/><rect x="2.2" y="5.2" width="1.4" height="2.4" fill="#202028"/><rect x="4.2" y="5" width="3.4" height="2.6" fill="#a8a8bc"/><rect x="1.8" y="8.6" width="6" height="1" fill="#9a9a9a"/></svg>
<span class="k" style="left:34.20px;top:456.20px;font-size:7px;">Dyno1</span>
<div style="left:67px;top:451px;width:60px;height:15.5px;background:#d4d0c8;box-shadow:inset 1px 0 0 #fff, inset -1px -1px 0 #404040"></div>
<svg style="left:68.4px;top:453.2px" width="10" height="11" viewBox="0 0 10 11"><path d="M0.6 0.6H7.2L9.4 2.8V10.4H0.6Z" fill="#eeeef2" stroke="#6a6a6a" stroke-width="0.9"/><path d="M7 0.4V3H9.6Z" fill="#202020"/><rect x="2" y="3" width="5.6" height="1.3" fill="#7a7a96"/><rect x="2.2" y="5.2" width="1.4" height="2.4" fill="#202028"/><rect x="4.2" y="5" width="3.4" height="2.6" fill="#a8a8bc"/><rect x="1.8" y="8.6" width="6" height="1" fill="#9a9a9a"/></svg>
<span class="k" style="left:81.00px;top:457.20px;font-size:7px;">short stroke ...</span>
<div style="left:0px;top:468px;width:666px;height:1px;background:#a9a69f"></div>
<div style="left:0px;top:469px;width:666px;height:1px;background:#f2f0eb"></div>
<div style="left:0px;top:480px;width:607px;height:1px;background:#cdcac3"></div>
<div style="left:0px;top:482px;width:666px;height:1px;background:#efede8"></div>
<span class="k" style="left:1.20px;top:473.20px;font-size:7px;">Ready</span>
<div style="left:608px;top:470.3px;width:17px;height:10.2px;box-shadow:inset 1px 1px 0 #8f8c86, inset -1px -1px 0 #fff"></div>
<div style="left:625.5px;top:470.3px;width:19.0px;height:10.2px;box-shadow:inset 1px 1px 0 #8f8c86, inset -1px -1px 0 #fff"></div>
<div style="left:645.8px;top:470.3px;width:20.200000000000045px;height:10.2px;box-shadow:inset 1px 1px 0 #8f8c86, inset -1px -1px 0 #fff"></div>
<span class="k" style="left:627.00px;top:473.40px;font-size:7px;">NUM</span>
</body></html>
